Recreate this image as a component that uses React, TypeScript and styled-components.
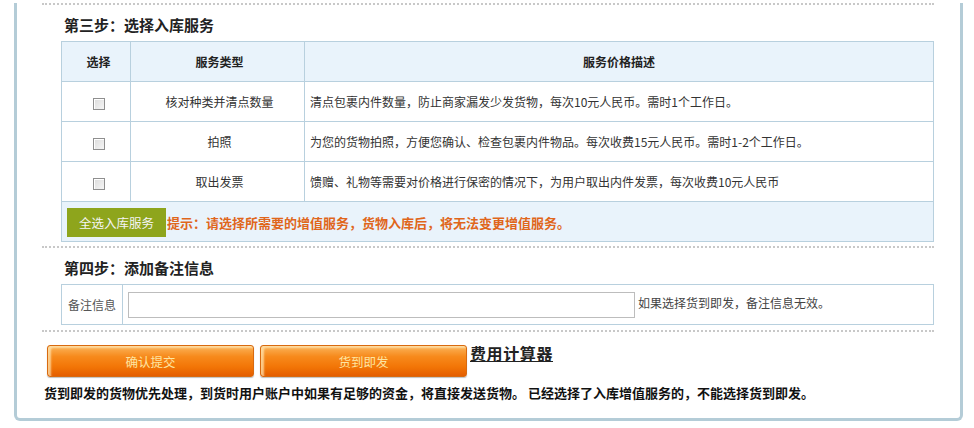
import React from "react";
import styled, { createGlobalStyle } from "styled-components";

const GlobalStyle = createGlobalStyle`
  html, body {
    margin: 0;
    padding: 0;
    background: #fff;
    font-family: "Noto Sans CJK SC", "Liberation Sans", sans-serif;
    color: #333;
  }
`;

const Frame = styled.div`
  margin-left: 14px;
  width: 949px;
  box-sizing: border-box;
  border: 3px solid #b4ccd7;
  border-top: none;
  border-radius: 0 0 6px 6px;
  padding: 0 26px 15px 25px;
`;

const Divider = styled.div<{ $top: number }>`
  margin-top: ${({ $top }) => $top}px;
  border-top: 2px dotted #c8c8c8;
`;

const Step = styled.div`
  padding-left: 19px;
`;

const StepTitle = styled.h3`
  margin: 0;
  padding: 4px 0 0 3px;
  line-height: 32px;
  font-size: 15px;
  font-weight: bold;
  color: #222;
`;

const Table = styled.table`
  width: 100%;
  border-collapse: collapse;
  border: 1px solid #b8d0de;
  font-size: 12px;
  color: #333;
`;

const Th = styled.th<{ $w?: number; $pad?: number }>`
  height: 39px;
  padding: 0 0 0 ${({ $pad }) => $pad || 0}px;
  background: #e9f3fb;
  border: 1px solid #b8d0de;
  font-weight: bold;
  font-size: 12px;
  color: #222;
  ${({ $w }) => ($w ? `width: ${$w}px;` : "")}
`;

const Td = styled.td<{ $align?: string; $pad?: number }>`
  height: 39px;
  padding: 0 5px 0 ${({ $pad }) => $pad ?? 5}px;
  border: 1px solid #b8d0de;
  text-align: ${({ $align }) => $align || "center"};
`;

const FootCell = styled.td`
  height: 39px;
  padding: 0 0 0 5px;
  background: #e9f3fb;
  border: 1px solid #b8d0de;
`;

const FootRow = styled.div`
  display: flex;
  align-items: center;
  padding-top: 1px;
`;

const Check = styled.input.attrs({ type: "checkbox" })`
  appearance: none;
  margin: 0;
  width: 12px;
  height: 12px;
  border: 1px solid #8f8f8f;
  background: linear-gradient(135deg, #dcdcdc, #f6f6f6);
  box-shadow: inset 1px 1px 0 #fff;
  vertical-align: middle;
`;

const GreenButton = styled.button`
  width: 99px;
  height: 29px;
  border: none;
  background: #8ea51c;
  color: #f4f4f4;
  font-family: inherit;
  font-size: 12.5px;
  padding: 0;
  cursor: pointer;
`;

const Tip = styled.span`
  color: #e0661b;
  font-weight: bold;
  font-size: 13px;
  margin-left: 1px;
`;

const LabelCell = styled.td`
  width: 60px;
  height: 39px;
  border: 1px solid #b8d0de;
  text-align: center;
  color: #555;
  padding: 0;
`;

const InputCell = styled.td`
  border: 1px solid #b8d0de;
  padding: 0 0 0 5px;
  color: #444;
`;

const RemarkInput = styled.input`
  width: 507px;
  height: 26px;
  box-sizing: border-box;
  border: 1px solid #bdbdbd;
  margin: 0 3px 0 0;
  vertical-align: middle;
`;

const Actions = styled.div`
  display: flex;
  align-items: flex-start;
  gap: 6px;
  margin-top: 13px;
  padding-left: 5px;
`;

const OrangeButton = styled.button`
  width: 207px;
  height: 32px;
  border: 1px solid #d86a10;
  border-radius: 3px;
  background: linear-gradient(#fbb45a 0%, #f78a1c 35%, #f27506 70%, #e45e00 100%);
  box-shadow: inset 3px 2px 2px rgba(255, 236, 190, 0.7), 0 1px 1px rgba(0, 0, 0, 0.25);
  color: #fde5a2;
  font-family: inherit;
  font-size: 12.5px;
  padding: 0;
  cursor: pointer;
`;

const CalcLink = styled.a`
  margin-left: -3px;
  margin-top: -4px;
  font-size: 16px;
  font-weight: bold;
  letter-spacing: 0.6px;
  color: #222;
  text-decoration: underline;
  line-height: 24px;
`;

const Note = styled.p`
  margin: 6px 0 0 2px;
  line-height: 20px;
  font-size: 13px;
  font-weight: bold;
  color: #111;
`;

const services = [
  {
    name: "核对种类并清点数量",
    desc: "清点包裹内件数量，防止商家漏发少发货物，每次10元人民币。需时1个工作日。",
  },
  {
    name: "拍照",
    desc: "为您的货物拍照，方便您确认、检查包裹内件物品。每次收费15元人民币。需时1-2个工作日。",
  },
  {
    name: "取出发票",
    desc: "馈赠、礼物等需要对价格进行保密的情况下，为用户取出内件发票，每次收费10元人民币",
  },
];

export default function App() {
  return (
    <>
      <GlobalStyle />
      <Frame>
        <Divider $top={3} />
        <Step>
          <StepTitle>第三步：选择入库服务</StepTitle>
          <Table>
            <thead>
              <tr>
                <Th $w={63} $pad={5}>选择</Th>
                <Th $w={169} $pad={4}>服务类型</Th>
                <Th>服务价格描述</Th>
              </tr>
            </thead>
            <tbody>
              {services.map((s) => (
                <tr key={s.name}>
                  <Td $pad={10}>
                    <Check />
                  </Td>
                  <Td $pad={9}>{s.name}</Td>
                  <Td $align="left">{s.desc}</Td>
                </tr>
              ))}
              <tr>
                <FootCell colSpan={3}>
                  <FootRow>
                    <GreenButton>全选入库服务</GreenButton>
                    <Tip>提示：请选择所需要的增值服务，货物入库后，将无法变更增值服务。</Tip>
                  </FootRow>
                </FootCell>
              </tr>
            </tbody>
          </Table>
        </Step>
        <Divider $top={4} />
        <Step>
          <StepTitle>第四步：添加备注信息</StepTitle>
          <Table>
            <tbody>
              <tr>
                <LabelCell>备注信息</LabelCell>
                <InputCell>
                  <RemarkInput />
                  如果选择货到即发，备注信息无效。
                </InputCell>
              </tr>
            </tbody>
          </Table>
        </Step>
        <Divider $top={5} />
        <Actions>
          <OrangeButton>确认提交</OrangeButton>
          <OrangeButton>货到即发</OrangeButton>
          <CalcLink href="#">费用计算器</CalcLink>
        </Actions>
        <Note>
          货到即发的货物优先处理，到货时用户账户中如果有足够的资金，将直接发送货物。 已经选择了入库增值服务的，不能选择货到即发。
        </Note>
      </Frame>
    </>
  );
}
